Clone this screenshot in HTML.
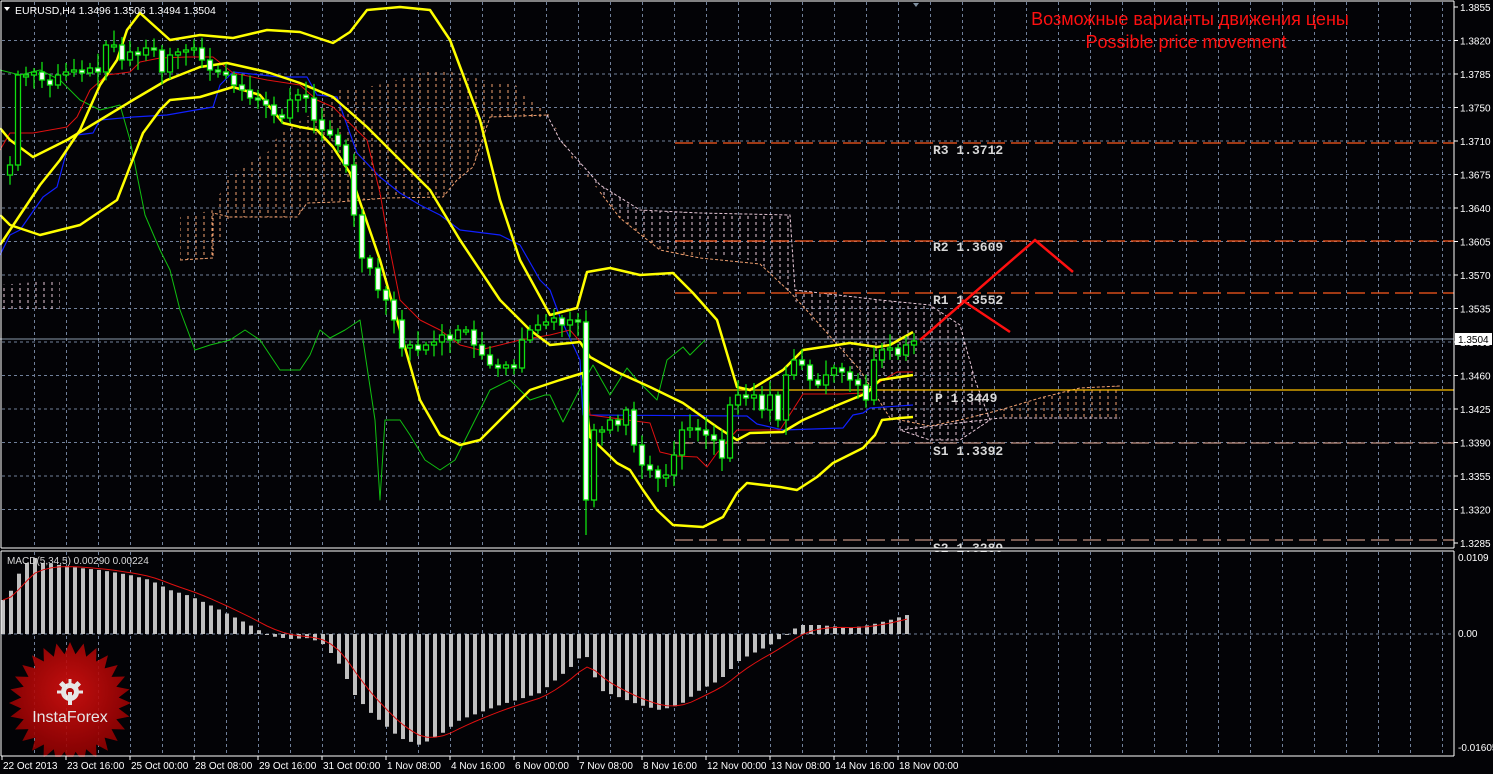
<!DOCTYPE html>
<html><head><meta charset="utf-8"><style>
html,body{margin:0;padding:0;background:#000;width:1493px;height:774px;overflow:hidden}
svg{display:block}
text{font-family:"Liberation Sans",sans-serif}
text.mono{font-family:"Liberation Mono",monospace}
</style></head><body>
<svg id="s" width="1493" height="774" xmlns="http://www.w3.org/2000/svg">
<defs>
<pattern id="po" width="8" height="6" patternUnits="userSpaceOnUse"><line x1="4" y1="0" x2="4" y2="3" stroke="#f0a070" stroke-width="1"/></pattern>
<pattern id="pp" width="8" height="6" patternUnits="userSpaceOnUse"><line x1="4" y1="0" x2="4" y2="3" stroke="#e8c8d8" stroke-width="1"/></pattern>
<radialGradient id="lg" cx="0.5" cy="0.4" r="0.6"><stop offset="0" stop-color="#d81010"/><stop offset="1" stop-color="#8a0000"/></radialGradient>
</defs>
<rect width="1493" height="774" fill="#030306"/>
<g id="grid" stroke="#70809a" stroke-width="1" stroke-dasharray="3,3"></g>
<polygon fill="url(#po)" points="180,217 213,210 227,177 247,163 267,153 280,133 290,127 313,113 337,90 367,87 387,83 420,73 433,69 457,73 490,82 513,82 527,98 547,110 557,130 573,157 590,177 600,183 620,210 660,245 700,252 700,258 660,250 620,218 600,192 573,160 547,118 490,117 473,167 457,180 443,197 387,198 337,202 307,203 297,217 230,217 213,258 180,260"/>
<polygon fill="url(#pp)" points="560,140 600,185 640,210 700,213 790,215 795,290 880,300 930,305 960,325 975,380 990,420 960,440 930,440 900,430 860,380 820,330 790,295 760,262 700,252 660,246 620,215 600,190 573,157"/>
<polygon fill="url(#po)" points="1000,410 1040,398 1080,388 1120,386 1120,418 1000,418"/>
<polygon fill="url(#pp)" points="0,285 60,280 60,312 0,312"/>
<polyline fill="none" stroke="#f0a070" stroke-width="1" stroke-dasharray="3,2" points="180,260 213,258 213,213 230,217 297,217 307,203 337,202 387,198 443,197 457,180 473,167 490,117 547,115"/>
<polyline fill="none" stroke="#f0a070" stroke-width="1" stroke-dasharray="3,2" points="600,192 620,218 660,250 700,258 760,264 790,292 820,325 860,370 890,418 930,426 960,420 1000,410 1040,398 1080,388 1120,386"/>
<polyline fill="none" stroke="#e8c8d8" stroke-width="1" stroke-dasharray="3,2" points="547,115 560,140 600,185 640,210 700,213 790,215 795,290 880,300 930,305 960,325 975,380 990,420 960,440 930,440 900,430 1000,418 1120,418"/>
<line x1="675" y1="143" x2="1454" y2="143" stroke="#ff5a1e" stroke-width="1.3" stroke-dasharray="18,6"/>
<line x1="675" y1="241" x2="1454" y2="241" stroke="#ff5a1e" stroke-width="1.3" stroke-dasharray="18,6"/>
<line x1="675" y1="293" x2="1454" y2="293" stroke="#ff5a1e" stroke-width="1.3" stroke-dasharray="18,6"/>
<line x1="675" y1="390" x2="1454" y2="390" stroke="#ffc000" stroke-width="1.3"/>
<line x1="675" y1="443" x2="1454" y2="443" stroke="#c09080" stroke-width="1.3" stroke-dasharray="18,6"/>
<line x1="675" y1="540" x2="1454" y2="540" stroke="#c09080" stroke-width="1.3" stroke-dasharray="18,6"/>
<line x1="0" y1="339" x2="1454" y2="339" stroke="#8a9aaa" stroke-width="1"/>
<g font-size="13" font-weight="bold" fill="#d8d8d8">
<text class="mono" x="933" y="154">R3 1.3712</text>
<text class="mono" x="933" y="251">R2 1.3609</text>
<text class="mono" x="933" y="304">R1 1.3552</text>
<text class="mono" x="935" y="402">P 1.3449</text>
<text class="mono" x="933" y="455">S1 1.3392</text>
<text class="mono" x="933" y="552">S2 1.3289</text>
</g>
<g id="ind" fill="none"></g>
<g id="cdl"></g>
<polyline points="920,340 1035,240 1073,272" fill="none" stroke="#ff1010" stroke-width="2.5"/>
<polyline points="962,300 1010,332" fill="none" stroke="#ff1010" stroke-width="2.5"/>
<g id="macd"></g>
<rect x="0" y="548" width="1493" height="3" fill="#030306"/>
<g transform="translate(70,703)" opacity="0.9">
<polygon id="star" fill="url(#lg)"/>
<g fill="#fff" transform="translate(0,-11)">
<circle cx="0" cy="0" r="9"/><circle cx="0" cy="0" r="4" fill="#c40a0a"/>
<rect x="-1.5" y="-13" width="3" height="6"/>
<rect x="-13" y="-1.5" width="6" height="3"/><rect x="7" y="-1.5" width="6" height="3"/>
<rect x="-10" y="-10" width="5" height="5" transform="rotate(45 -7.5 -7.5)"/><rect x="5" y="-10" width="5" height="5" transform="rotate(45 7.5 -7.5)"/>
<rect x="-2" y="0" width="4" height="13"/>
</g>
<text x="0" y="19" font-size="16" fill="#fff" text-anchor="middle">InstaForex</text>
</g>
<rect x="0" y="757" width="1493" height="17" fill="#030306"/>
<line x1="1" y1="1" x2="1454" y2="1" stroke="#fff"/>
<line x1="1" y1="1" x2="1" y2="548" stroke="#fff"/>
<line x1="1" y1="548" x2="1454" y2="548" stroke="#fff"/>
<line x1="1454" y1="1" x2="1454" y2="548" stroke="#fff"/>
<line x1="1" y1="551" x2="1454" y2="551" stroke="#fff"/>
<line x1="1" y1="551" x2="1" y2="756" stroke="#fff"/>
<line x1="1" y1="756" x2="1454" y2="756" stroke="#fff"/>
<line x1="1454" y1="551" x2="1454" y2="756" stroke="#fff"/>
<polygon points="913,3 919,3 916,7" fill="#8090a0"/>
<polygon points="4,7 10,7 7,11" fill="#fff"/>
<text x="15" y="14" font-size="10.5" fill="#fff">EURUSD,H4  1.3496 1.3506 1.3494 1.3504</text>
<text x="1190" y="25" font-size="18" fill="#ff1010" text-anchor="middle">Возможные варианты движения цены</text>
<text x="1186" y="48" font-size="18" fill="#ff1010" text-anchor="middle">Possible price movement</text>
<text x="7" y="564" font-size="10" fill="#d8d8d8">MACD(5,34,5) 0.00290 0.00224</text>
<g id="axis" font-size="10" fill="#fff"></g>
<rect x="1455" y="333" width="37" height="12" fill="#fff"/>
<text x="1458" y="343" font-size="10" fill="#000">1.3504</text>
</svg>
<script>
(function(){
var NS="http://www.w3.org/2000/svg";
function el(t,a,p){var e=document.createElementNS(NS,t);for(var k in a)e.setAttribute(k,a[k]);(p||document.getElementById('s')).appendChild(e);return e;}
var grid=document.getElementById('grid');
for(var k=0;k<=44;k++){var x=34.5+32*k;el('line',{x1:x,y1:2,x2:x,y2:547},grid);el('line',{x1:x,y1:552,x2:x,y2:755},grid);}
var py=[7,40.5,74,107.5,141,174.5,208,241.5,275,308.5,342,375.5,409,442.5,476,509.5,543];
var pl=["1.3855","1.3820","1.3785","1.3750","1.3710","1.3675","1.3640","1.3605","1.3570","1.3535","1.3495","1.3460","1.3425","1.3390","1.3355","1.3320","1.3285"];
var ax=document.getElementById('axis');
py.forEach(function(y,i){if(i>0&&i<16)el('line',{x1:2,y1:y,x2:1453,y2:y},grid);var t=el('text',{x:1460,y:y+4},ax);t.textContent=pl[i];el('line',{x1:1454,y1:y,x2:1458,y2:y,stroke:'#fff'},ax);});
el('line',{x1:2,y1:634,x2:1453,y2:634},grid);
[["0.0109",561],["0.00",637],["-0.01605",751]].forEach(function(a){var t=el('text',{x:1458,y:a[1]},ax);t.textContent=a[0];});
var tl=["22 Oct 2013","23 Oct 16:00","25 Oct 00:00","28 Oct 08:00","29 Oct 16:00","31 Oct 00:00","1 Nov 08:00","4 Nov 16:00","6 Nov 00:00","7 Nov 08:00","8 Nov 16:00","12 Nov 00:00","13 Nov 08:00","14 Nov 16:00","18 Nov 00:00"];
tl.forEach(function(s,i){var x=2+64*i;var t=el('text',{x:x+1,y:769,'font-size':10},ax);t.textContent=s;el('line',{x1:x,y1:756,x2:x,y2:760,stroke:'#fff'},ax);});
var ind=document.getElementById('ind');
function pline(pts,c,w){el('polyline',{points:pts,stroke:c,'stroke-width':w,fill:'none','stroke-linejoin':'round'},ind);}
pline("0,70 20,75 40,70 60,80 80,100 100,110 120,105 130,140 145,215 160,250 170,270 180,310 195,350 210,345 230,340 245,330 260,340 280,370 300,370 310,355 320,330 330,338 345,330 360,320 375,420 380,500 385,420 400,420 410,435 425,460 440,470 455,460 475,420 490,390 510,380 530,400 545,395 550,395 563,422 583,383 593,365 610,395 627,368 637,380 657,400 667,360 683,347 690,355 705,340","#10c010",1);
pline("0,255 10,235 20,230 43,197 57,187 67,150 77,135 93,133 100,120 133,117 167,115 213,107 220,85 233,72 280,77 307,77 317,95 337,97 357,153 380,177 400,193 420,205 440,215 460,230 500,235 520,245 540,280 550,290 560,317 580,360 583,415 747,416 757,424 783,430 843,428 853,415 863,413 870,408 913,405","#1020ff",1.2);
pline("0,150 10,133 33,133 67,127 77,117 90,90 107,75 130,72 140,62 160,58 187,57 213,57 233,73 267,80 300,85 317,100 333,107 367,140 380,193 390,250 400,300 420,320 440,330 460,345 480,350 500,345 520,340 550,335 570,330 583,345 590,415 650,423 660,452 677,456 697,457 707,467 717,453 737,430 780,430 803,394 843,394 863,393 883,380 897,372 913,372","#e01010",1);
pline("0,245 20,215 40,185 60,160 80,130 100,85 117,60 127,30 140,13 170,40 200,35 233,38 267,30 300,32 333,43 350,32 367,10 400,7 430,10 450,40 480,120 500,200 520,260 550,315 577,308 587,272 610,268 640,275 673,273 693,293 717,320 737,387 750,390 783,370 803,350 850,343 877,347 890,345 913,332","#ffff00",2.5);
pline("0,128 10,140 33,157 67,140 100,120 133,100 167,80 200,67 227,63 267,72 300,83 333,97 367,127 400,160 430,190 460,240 500,300 530,330 550,345 580,342 590,357 617,372 650,387 683,403 717,427 737,440 750,433 783,432 803,420 833,407 867,393 880,380 913,375","#ffff00",2.5);
pline("0,215 10,225 40,235 80,225 117,200 143,133 160,110 170,100 200,97 233,87 260,95 283,123 300,127 317,130 333,147 350,173 380,260 400,330 420,400 440,435 460,445 480,440 500,420 530,390 560,380 583,373 590,437 617,463 630,470 643,490 657,510 673,525 703,527 723,517 737,493 747,483 780,487 797,490 817,477 833,463 863,448 875,435 882,420 900,418 913,417","#ffff00",2.5);
var C=[[10,165],[18,75],[26,75],[34,72],[42,80],[50,85],[58,75],[66,72],[74,70],[82,73],[90,68],[98,72],[106,45],[114,45],[122,60],[130,52],[138,55],[146,48],[154,50],[162,72],[170,55],[178,52],[186,50],[194,48],[202,60],[210,70],[218,72],[226,75],[234,85],[242,90],[250,98],[258,100],[266,105],[274,115],[282,118],[290,100],[298,95],[306,98],[314,120],[322,130],[330,135],[338,145],[346,165],[354,215],[362,258],[370,268],[378,290],[386,300],[394,320],[402,348],[410,345],[418,350],[426,345],[434,342],[442,335],[450,340],[458,330],[466,330],[474,345],[482,355],[490,365],[498,368],[506,365],[514,368],[522,340],[530,330],[538,325],[546,322],[554,318],[562,325],[570,320],[578,322],[586,500],[594,430],[602,430],[610,420],[618,425],[626,410],[634,445],[642,465],[650,470],[658,478],[666,475],[674,455],[682,430],[690,428],[698,430],[706,435],[714,440],[722,458],[730,405],[738,395],[746,398],[754,395],[762,410],[770,395],[778,420],[786,375],[794,360],[802,365],[810,380],[818,385],[826,375],[834,368],[842,372],[850,380],[858,385],[866,400],[874,360],[882,350],[890,348],[898,355],[906,345],[914,341]];
var cg=document.getElementById('cdl');var seed=7;function rnd(){seed=(seed*9301+49297)%233280;return seed/233280;}
for(var i=0;i<C.length;i++){var cx=C[i][0],c=C[i][1],o=i?C[i-1][1]:c+10;var hi=Math.min(o,c),lo=Math.max(o,c);if(lo-hi<2){lo=hi+2;}
var wt=hi-3-rnd()*12,wb=lo+3+rnd()*12;if(i==72){wb=535;}
el('line',{x1:cx,y1:wt,x2:cx,y2:wb,stroke:'#10e010','stroke-width':1.3},cg);
el('rect',{x:cx-2.5,y:hi,width:5,height:lo-hi,fill:(c>o?'#fff':'#000'),stroke:'#10e010','stroke-width':1.3},cg);}
var mg=document.getElementById('macd');
var M=[[3,600],[10,593],[18,575],[27,563],[35,558],[43,563],[60,565],[80,568],[100,570],[130,575],[150,580],[170,590],[190,596],[210,605],[230,615],[250,625],[262,632],[270,636],[290,639],[310,638],[325,645],[340,665],[355,695],[370,712],[385,725],[400,738],[420,745],[440,735],[460,720],[500,705],[540,693],[570,668],[585,652],[600,690],[640,705],[660,710],[680,705],[700,690],[720,680],[740,660],[770,645],[790,632],[800,625],[820,625],[850,628],[870,625],[890,620],[914,613]];
function mv(x){for(var j=1;j<M.length;j++){if(x<=M[j][0]){var a=M[j-1],b=M[j];return a[1]+(b[1]-a[1])*(x-a[0])/(b[0]-a[0]);}}return M[M.length-1][1];}
var sig=[],prev=600;
for(var mx=3;mx<=914;mx+=8){var v=mv(mx);var tt=Math.min(v,634),h=Math.abs(v-634);el('rect',{x:mx-2,y:tt,width:4,height:Math.max(h,1),fill:'#c0c0c0'},mg);prev=prev+(v-prev)*0.33;sig.push(mx+','+prev.toFixed(1));}
el('polyline',{points:sig.join(' '),fill:'none',stroke:'#e01010','stroke-width':1},mg);
var pts=[];for(var q=0;q<56;q++){var r=q%2?49:61;var an=q*Math.PI/28-Math.PI/2;pts.push((r*Math.cos(an)).toFixed(1)+','+(r*Math.sin(an)).toFixed(1));}
document.getElementById('star').setAttribute('points',pts.join(' '));
})();
</script>
</body></html>
